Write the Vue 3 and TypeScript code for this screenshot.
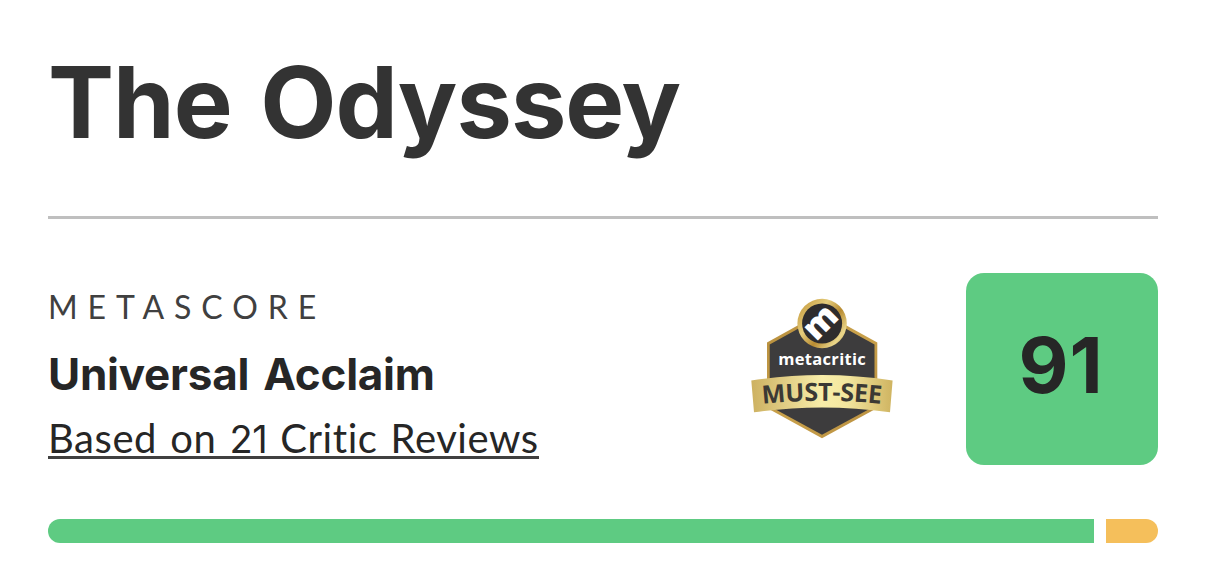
<script setup lang="ts">
interface Segment {
  name: string
  width: number
}

const title = 'The Odyssey'
const score = 91
const reviewCount = 21

const segments: Segment[] = [
  { name: 'positive', width: 1046 },
  { name: 'mixed', width: 52 },
]
</script>

<template>
  <main class="product">
    <h1 class="title">{{ title }}</h1>
    <section class="summary">
      <div class="details">
        <span class="label">METASCORE</span>
        <strong class="sentiment">Universal Acclaim</strong>
        <a class="reviews">Based on <span class="count">{{ reviewCount }}</span> Critic Reviews</a>
      </div>
      <svg class="badge" viewBox="0 0 160 156" width="160" height="156">
        <defs>
          <linearGradient id="ribbon" x1="0" x2="1" y1="0" y2="0">
            <stop offset="0" stop-color="#cdb160" />
            <stop offset=".18" stop-color="#dcc67c" />
            <stop offset=".5" stop-color="#f8eda9" />
            <stop offset=".68" stop-color="#f3e69e" />
            <stop offset="1" stop-color="#cfb461" />
          </linearGradient>
          <linearGradient id="edge" x1="0" x2="1" y1="0" y2="1">
            <stop offset="0" stop-color="#b68d3c" />
            <stop offset=".5" stop-color="#c9a14b" />
            <stop offset="1" stop-color="#b98f40" />
          </linearGradient>
          <linearGradient id="ring" x1="0" x2="1" y1="0.2" y2="1">
            <stop offset="0" stop-color="#c99f43" />
            <stop offset=".3" stop-color="#e5cd7d" />
            <stop offset=".55" stop-color="#b88b31" />
            <stop offset=".8" stop-color="#ead68a" />
            <stop offset="1" stop-color="#c79d43" />
          </linearGradient>
          <path id="arc" d="M20.5 114 Q80 107.6 140.5 114" />
        </defs>
        <path d="M80 22 L135.3 52.6 V118 L80 148.2 L25 118 V52.6 Z" fill="url(#edge)" />
        <path d="M80 25.5 L132.5 54.4 V116.3 L80 144.8 L27.7 116.3 V54.4 Z" fill="#3d3c3d" />
        <circle cx="80.1" cy="33.5" r="24.7" fill="url(#ring)" />
        <circle cx="80.1" cy="33.5" r="20" fill="#2e2c2d" />
        <text class="mark" x="80" y="42.5" transform="rotate(-45 80 33.5)">m</text>
        <text class="brand" x="36.3" y="75.3" textLength="87.5">metacritic</text>
        <path d="M9.3 90.5 Q80 79.5 150.6 90.5 L148 122.3 Q80 112.5 12 122.3 Z" fill="url(#ribbon)" />
        <text class="award" textLength="119">
          <textPath href="#arc" textLength="119">MUST-SEE</textPath>
        </text>
      </svg>
      <div class="score">{{ score }}</div>
    </section>
    <div class="distribution">
      <span
        v-for="segment in segments"
        :key="segment.name"
        :class="['segment', segment.name]"
        :style="{ flexGrow: segment.width }"
      />
    </div>
  </main>
</template>

<style>
body {
  background: #fff;
}
</style>

<style scoped>
.product {
  box-sizing: border-box;
  height: 579px;
  padding: 48px 48px 0;
  font-family: Lato, "Liberation Sans", sans-serif;
  color: #262626;
}

.title {
  margin: 0;
  height: 168px;
  border-bottom: 3px solid #bfbfbf;
  font-family: Inter, sans-serif;
  font-size: 99px;
  font-weight: 700;
  line-height: 108px;
  letter-spacing: -1px;
  word-spacing: 6px;
  color: #333;
}

.summary {
  display: flex;
  height: 192px;
  margin-top: 54px;
}

.details {
  display: flex;
  flex: 1;
  flex-direction: column;
  align-items: flex-start;
  padding-top: 14px;
  white-space: nowrap;
}

.label {
  font-size: 32px;
  line-height: 39px;
  letter-spacing: 9.9px;
  color: #404040;
}

.sentiment {
  margin-top: 21px;
  font-family: Inter, sans-serif;
  font-size: 44px;
  font-weight: 700;
  line-height: 55px;
  letter-spacing: -.25px;
  word-spacing: 4px;
}

.reviews {
  height: 40px;
  margin-top: 14px;
  border-bottom: 3px solid #404040;
  font-size: 40px;
  line-height: 44px;
  letter-spacing: .55px;
  word-spacing: 2.4px;
}

.count {
  font-family: Inter, sans-serif;
  font-size: 38px;
  font-weight: 400;
  letter-spacing: -.5px;
}

.badge {
  margin: 17px 64px 0 0;
}

.mark,
.brand,
.award {
  font-family: "Open Sans", "Noto Sans", sans-serif;
  font-weight: 700;
}

.mark {
  font-size: 34px;
  font-weight: 800;
  text-anchor: middle;
  fill: #fff;
}

.brand {
  font-size: 16.5px;
  fill: #fff;
}

.award {
  font-size: 25px;
  fill: #3b3934;
}

.score {
  width: 192px;
  height: 192px;
  border-radius: 18px;
  background: #5ecb82;
  font-family: Inter, sans-serif;
  font-size: 77px;
  font-weight: 700;
  line-height: 184px;
  letter-spacing: 1px;
  text-indent: -2px;
  text-align: center;
}

.distribution {
  display: flex;
  gap: 12px;
  height: 24px;
  margin-top: 54px;
}

.segment {
  flex-basis: 0;
}

.positive {
  border-radius: 12px 0 0 12px;
  background: #5ecb82;
}

.mixed {
  border-radius: 0 12px 12px 0;
  background: #f5bf5b;
}
</style>
